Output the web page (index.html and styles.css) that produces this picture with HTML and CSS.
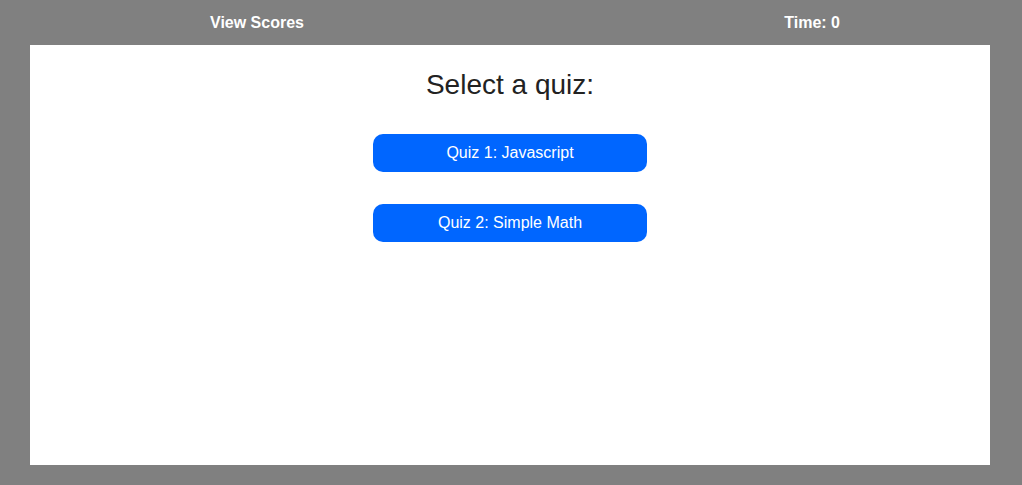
FILE: index.html
```html
<!DOCTYPE html>
<html>
<head>
<meta charset="utf-8">
<link rel="stylesheet" href="styles.css">
</head>
<body>
<header class="topbar">
  <a class="scores-link">View Scores</a>
  <span class="timer">Time: 0</span>
</header>
<main class="panel">
  <h1 class="title">Select a quiz:</h1>
  <div class="quiz-list">
    <button class="quiz-btn">Quiz 1: Javascript</button>
    <button class="quiz-btn">Quiz 2: Simple Math</button>
  </div>
</main>
</body>
</html>
```
FILE: styles.css
```css
html, body {
  margin: 0;
  padding: 0;
  height: 100%;
}
body {
  background: #808080;
  font-family: "Liberation Sans", Arial, sans-serif;
  display: flex;
  flex-direction: column;
  align-items: flex-start;
}
.topbar {
  box-sizing: border-box;
  width: 100%;
  height: 45px;
  display: flex;
  justify-content: space-between;
  align-items: center;
  padding: 0 182px 0 210px;
  color: #fff;
  font-weight: bold;
  font-size: 16px;
}
.panel {
  box-sizing: border-box;
  width: 960px;
  height: 420px;
  margin-left: 30px;
  background: #fff;
  display: flex;
  flex-direction: column;
  align-items: center;
  padding-top: 24px;
}
.title {
  margin: 0;
  font-weight: normal;
  font-size: 28px;
  line-height: 32px;
  color: #222;
}
.quiz-list {
  margin-top: 33px;
  display: flex;
  flex-direction: column;
  gap: 32px;
}
.quiz-btn {
  width: 274px;
  height: 38px;
  border: none;
  border-radius: 10px;
  background: #0066ff;
  color: #fff;
  font-family: "Liberation Sans", Arial, sans-serif;
  font-size: 16px;
  padding: 0;
}
```
